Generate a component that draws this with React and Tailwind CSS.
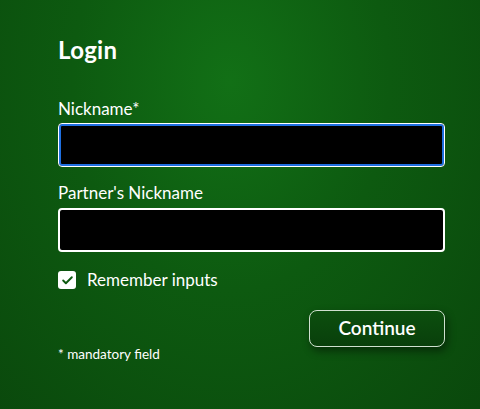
import { Check } from 'lucide-react'

const font = { fontFamily: 'Lato, "Noto Sans", sans-serif' }

export default function App() {
  return (
    <div
      className="w-[480px] h-[409px] overflow-hidden bg-[radial-gradient(ellipse_at_48%_20%,#127016_0%,#0d5a10_45%,#0a480c_100%)] text-white"
      style={font}
    >
      <div className="pl-[58px] pr-[35px] pt-[35px]">
        <h1 className="text-[24px] font-bold leading-[30px] tracking-[0.3px]">Login</h1>

        <label className="block mt-[33px] text-[17px] leading-[22px]">Nickname*</label>
        <div className="mt-[3px] h-[44px] rounded-[4px] bg-black border border-white ring-2 ring-[#1f6fe0] ring-inset" />

        <label className="block mt-[15px] text-[17px] leading-[22px]">Partner's Nickname</label>
        <div className="mt-[4px] h-[44px] rounded-[4px] bg-black border-2 border-white" />

        <div className="mt-[17px] flex items-center gap-[11px]">
          <div className="w-[18px] h-[18px] rounded-[3px] bg-white flex items-center justify-center">
            <Check className="w-[13px] h-[13px] text-[#0d5a10]" strokeWidth={3.5} />
          </div>
          <span className="text-[17px] leading-[22px]">Remember inputs</span>
        </div>

        <div className="mt-[19px] flex justify-end">
          <button className="w-[136px] h-[37px] rounded-[8px] border border-[#cfe0cf] bg-[linear-gradient(180deg,#0c4f0e,#093f0b)] text-[19px] font-semibold shadow-[2px_4px_8px_rgba(0,0,0,0.45)]">
            Continue
          </button>
        </div>

        <p className="-mt-[1px] text-[13.5px] leading-[16px]">* mandatory field</p>
      </div>
    </div>
  )
}
